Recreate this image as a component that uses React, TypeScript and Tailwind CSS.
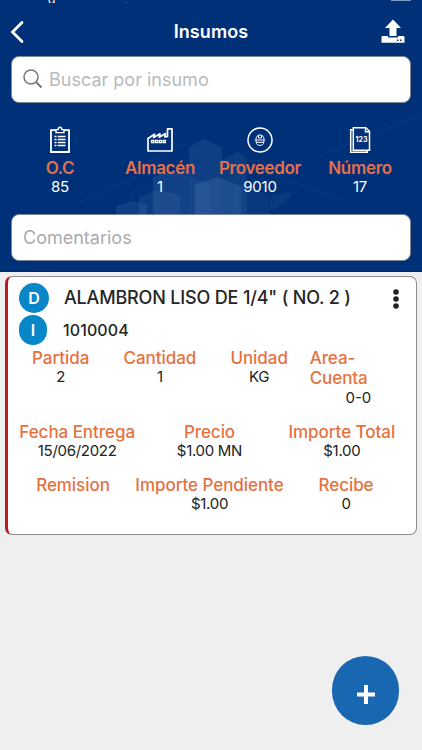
import type { ReactNode } from 'react';
import { clsx } from 'clsx';

const SUMMARY = [
  { key: 'oc', label: 'O.C', value: '85', icon: <ClipboardIcon /> },
  { key: 'almacen', label: 'Almacén', value: '1', icon: <FactoryIcon /> },
  { key: 'proveedor', label: 'Proveedor', value: '9010', icon: <SupplierIcon /> },
  { key: 'numero', label: 'Número', value: '17', icon: <NumberIcon /> },
];

function ClipboardIcon() {
  return (
    <svg width="22" height="28" viewBox="0 0 22 28" fill="none" stroke="white">
      <path d="M7 4.200H2V26h18V4.200h-5" strokeWidth="1.800" />
      <path d="M7 6.600V3.600h2.200C9.200 1.900 9.900 1.200 11 1.200s1.800.7 1.800 2.400H15v3z" strokeWidth="1.400" />
      <path d="M5.500 10.500h2M8.700 10.500h7.800M5.500 13.500h2M8.700 13.500h7.800M5.500 16.500h2M8.700 16.500h7.800M5.500 19.500h2M8.700 19.500h7.800" strokeWidth="1.600" />
    </svg>
  );
}

function FactoryIcon() {
  return (
    <svg width="26" height="28" viewBox="0 0 26 28" fill="none" stroke="white">
      <path d="M1 25V12.500l6.500-4.300-.8 3.200L13 7.800l-.8 3.400 6.300-3.600L17.800 11l2.700-.5V2.800H25V25z" strokeWidth="1.700" strokeLinejoin="round" />
      <path d="M4.500 14.500h2.200v2.200H4.500zM8.400 14.500h2.200v2.200H8.400zM12.300 14.500h2.200v2.200h-2.200zM16.200 14.500h2.200v2.200h-2.200z" strokeWidth="1.300" />
    </svg>
  );
}

function SupplierIcon() {
  return (
    <svg width="26" height="28" viewBox="0 0 26 28" fill="none" stroke="white">
      <circle cx="13" cy="14" r="12" strokeWidth="1.500" />
      <path d="M9 13.500c0-2.800 1.500-4.500 4-4.500s4 1.700 4 4.500M11.500 9.300v2.700h3V9.300" strokeWidth="1" />
      <path d="M7.700 14h10.600M9.200 14.500v1.700c0 1.800 1.500 3.200 3.800 3.200s3.800-1.400 3.800-3.200v-1.700M9.500 16.300h7" strokeWidth="1" />
    </svg>
  );
}

function NumberIcon() {
  return (
    <svg width="22" height="28" viewBox="0 0 22 28" fill="none" stroke="white">
      <path d="M4.300 1.700h12.500l3.700 3.500v19H4.300z" strokeWidth="1.500" />
      <path d="M16.500 1.700v4h4" strokeWidth="1.400" />
      <path d="M4 3.800H1.700v22.500h16.500v-2" strokeWidth="1.500" />
      <text x="12.500" y="15.500" textAnchor="middle" fill="white" stroke="none" className="font-[Inter] text-[7px] font-bold">123</text>
    </svg>
  );
}

function CityBackdrop() {
  return (
    <svg className="absolute left-0 top-[110px]" width="422" height="120" viewBox="0 0 422 120" fill="#7fa5d8">
      <path d="M189 37l15-8 18 8v70h-33z" fillOpacity="0.13" />
      <path d="M153 67l18-5 18-6v51h-36z" fillOpacity="0.09" />
      <path d="M153 67l18-6 18 6 22 8v32h-58z" fillOpacity="0.07" />
      <path d="M222 50l15-8 10 7v58h-25z" fillOpacity="0.1" />
      <path d="M195 75l22-8 24 9v31h-46z" fillOpacity="0.16" />
      <path d="M139 86l18-6 23 5v22h-41z" fillOpacity="0.1" />
      <path d="M116 96l16-5 15 4v12h-31z" fillOpacity="0.13" />
      <path d="M241 74l28 11v22h-28z" fillOpacity="0.07" />
      <path d="M270 86l24-4-9 11-15 8z" fillOpacity="0.08" />
      <g fill="none" stroke="#7fa5d8" strokeOpacity="0.07">
        <path d="M80 92l75-34M130 98c-3-18 14-30 28-12M250 56l92 34M422 5l-100 40M185 34l-60 30" />
        <path d="M157 84v21M237 42v65" />
      </g>
    </svg>
  );
}

type FieldProps = { label: string; value?: string; className?: string };

function Field({ label, value, className }: FieldProps) {
  return (
    <div className={clsx('flex flex-col items-center whitespace-nowrap', className)}>
      <span className="text-[17px] font-medium leading-5 tracking-[-0.05px] text-[#e5713f]">{label}</span>
      <span className="h-[18px] text-[15px] leading-[18px] tracking-[-0.3px] text-[#222]">{value}</span>
    </div>
  );
}

function Badge({ children, className }: { children: ReactNode; className?: string }) {
  return (
    <span className={clsx('flex items-center justify-center rounded-full bg-[#0787c8] text-[16px] font-semibold text-white', className)}>
      {children}
    </span>
  );
}

function ItemCard() {
  return (
    <article className="mx-[5px] mt-1 h-[259px] rounded-[7px] border border-l-[3px] border-[#8c8c8c] border-l-[#bd1820] bg-white pl-[3px] pr-[8px]">
      <div className="flex h-[34px] items-center pl-2 pt-[7px]">
        <Badge className="h-[30px] w-[30px]">D</Badge>
        <h2 className="ml-[15px] flex-1 whitespace-nowrap text-[18px] font-medium tracking-[-0.17px] text-[#252525]">
          ALAMBRON LISO DE 1/4" ( NO. 2 )
        </h2>
        <svg className="mr-[9px] mt-[3px]" width="6" height="20" viewBox="0 0 6 20" fill="#222">
          <circle cx="3" cy="3" r="2.800" />
          <circle cx="3" cy="10" r="2.800" />
          <circle cx="3" cy="17" r="2.800" />
        </svg>
      </div>
      <div className="flex h-[34px] items-center pl-2 pt-1">
        <Badge className="h-[30px] w-7">I</Badge>
        <span className="ml-[16px] text-[16px] font-medium tracking-[0.1px] text-[#252525]">1010004</span>
      </div>
      <div className="mt-[3px] grid h-[74px] grid-cols-4">
        <Field label="Partida" value="2" />
        <Field label="Cantidad" value="1" />
        <Field label="Unidad" value="KG" />
        <div className="flex flex-col">
          <span className="pl-px text-[17px] font-medium leading-5 tracking-[-0.1px] text-[#e5713f]">Area-<br />Cuenta</span>
          <span className="text-center text-[15px] leading-5 text-[#222]">0-0</span>
        </div>
      </div>
      <div className="grid h-[53px] grid-cols-3">
        <Field label="Fecha Entrega" value="15/06/2022" />
        <Field label="Precio" value="$1.00 MN" />
        <Field label="Importe Total" value="$1.00" />
      </div>
      <div className="flex">
        <Field label="Remision" className="flex-1" />
        <Field label="Importe Pendiente" value="$1.00" className="w-[149px]" />
        <Field label="Recibe" value="0" className="flex-1" />
      </div>
    </article>
  );
}

export default function App() {
  return (
    <main className="relative h-[750px] w-[422px] overflow-hidden bg-[#efefef] font-[Inter,sans-serif]">
      <header className="relative h-[272px] border-b border-[#0a2463] bg-[#003078]">
        <CityBackdrop />
        <div className="relative">
          {/* Status bar, scrolled mostly out of view */}
          <div className="flex h-[3px] items-end justify-between overflow-hidden pl-[48px] pr-[11px] text-[12px] text-white">
            <div className="flex h-[3px] items-end gap-[69px] leading-[6px]">
              <span>g</span>
              <span>,</span>
            </div>
            <span className="mb-[2px] h-px w-5 bg-[#7c9bc4]" />
          </div>

          <div className="flex h-[53px] items-center justify-between pl-[10px] pr-[17px] pt-1">
            <svg width="15" height="24" viewBox="0 0 15 24" fill="none" stroke="white" strokeWidth="2.800" strokeLinecap="round">
              <path d="M12 2.500L2.500 12 12 21.500" />
            </svg>
            <h1 className="pl-4 text-[18px] font-semibold tracking-[0.1px] text-white">Insumos</h1>
            <svg width="24" height="26" viewBox="0 0 24 26" fill="white">
              <path d="M12 .5l8 8.500h-4.500v8h-7V9H4z" />
              <path d="M1.500 17H7v1.500h10V17h5.500l1 .8v5.900H.5v-5.900z" />
              <path d="M16 20.500h1.500V22H16zM19 20.500h1.500V22H19z" fill="#003078" />
            </svg>
          </div>

          <div className="mx-[11px] flex h-[47px] items-center rounded-lg border border-[#7b8796] bg-white pl-[10px]">
            <svg className="-mt-0.5" width="22" height="22" viewBox="0 0 22 22" fill="none" stroke="#777" strokeWidth="1.500">
              <circle cx="9" cy="9" r="7" />
              <path d="M14 14l5.500 5.500" strokeWidth="2" />
            </svg>
            <span className="ml-[5px] text-[18px] text-[#b9b9bd]">Buscar por insumo</span>
          </div>

          <div className="ml-[10px] mr-[12px] grid h-[111px] grid-cols-4 pt-[23px]">
            {SUMMARY.map(({ key, label, value, icon }) => (
              <div key={key} className="flex flex-col items-center">
                {icon}
                <span className="mt-1 text-[17px] font-semibold leading-5 tracking-[-0.3px] text-[#e5704a]">{label}</span>
                <span className="text-[15px] leading-[18px] tracking-[-0.2px] text-white">{value}</span>
              </div>
            ))}
          </div>

          <div className="mx-[11px] flex h-[47px] items-center rounded-lg border border-[#7b8796] bg-white pl-[11px] text-[18px] text-[#aaaaae]">
            Comentarios
          </div>
        </div>
      </header>

      <ItemCard />

      <button className="absolute bottom-[25px] right-[23px] flex h-[69px] w-[67px] items-center justify-center rounded-full bg-[#1967b1] pt-2">
        <svg width="18" height="19" viewBox="0 0 18 19" fill="none" stroke="white" strokeWidth="4">
          <path d="M9 0v19M0 9.500h18" />
        </svg>
      </button>
    </main>
  );
}
